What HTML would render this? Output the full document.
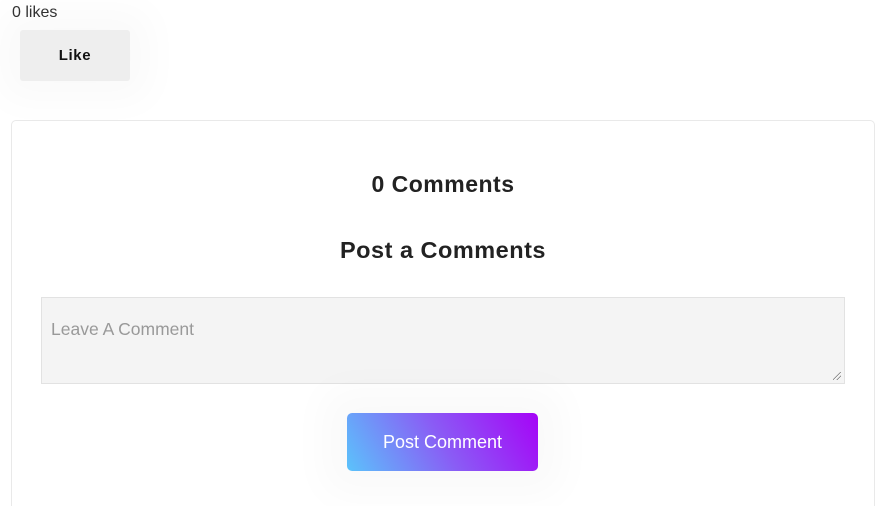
<!DOCTYPE html>
<html><head><meta charset="utf-8"><style>
html,body{margin:0;padding:0;width:878px;height:505px;overflow:hidden;background:#fff;font-family:"Liberation Sans",sans-serif;}
.likes{position:absolute;left:12px;top:4px;font-size:16px;color:#333;}
.like{position:absolute;left:20px;top:30px;width:110px;height:51px;background:#eee;border-radius:3px;box-shadow:0 0 40px 20px rgba(0,0,0,0.025);text-align:center;line-height:51px;font-size:15px;font-weight:bold;letter-spacing:0.6px;color:#111;}
.card{position:absolute;left:11px;top:120px;width:862px;height:385px;border:1px solid #e9e9e9;border-bottom:none;border-radius:5px 5px 0 0;}
h2{position:absolute;left:0;width:886px;margin:0;text-align:center;font-size:22px;font-weight:bold;color:#222;letter-spacing:0.5px;}
.ta{position:absolute;left:41px;top:297px;width:802px;height:85px;background:#f4f4f4;border:1px solid #e2e2e2;}
.ta span{position:absolute;left:9px;top:21px;font-size:17.5px;color:#999;}
.ta i{position:absolute;right:3px;bottom:3px;width:8px;height:8px;background:linear-gradient(135deg,transparent 45%,#777 46%,#777 52%,transparent 53%,transparent 70%,#777 71%,#777 77%,transparent 78%);}
.btn{position:absolute;left:347px;top:413px;width:191px;height:58px;border-radius:5px;background:linear-gradient(60deg,#5bc3fb 0%,#8a5cf5 50%,#a603f7 100%);color:#fff;text-align:center;line-height:58px;font-size:18px;box-shadow:0 0 40px 25px rgba(0,0,0,0.025);}
</style></head><body>
<div class="likes">0 likes</div>
<div class="like">Like</div>
<div class="card"></div>
<h2 style="top:171px;font-size:23px">0 Comments</h2>
<h2 style="top:237px;font-size:23.5px">Post a Comments</h2>
<div class="ta"><span>Leave A Comment</span><i></i></div>
<div class="btn">Post Comment</div>
</body></html>
